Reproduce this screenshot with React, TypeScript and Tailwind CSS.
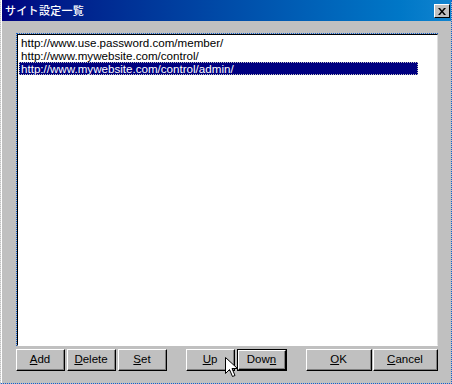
import React from 'react';

const urls = [
  'http://www.use.password.com/member/',
  'http://www.mywebsite.com/control/',
  'http://www.mywebsite.com/control/admin/',
];

const Btn = ({
  label,
  u,
  w,
  ml,
  isDefault = false,
}: {
  label: string;
  u: number;
  w: string;
  ml: string;
  isDefault?: boolean;
}) => {
  const before = label.slice(0, u);
  const key = label.slice(u, u + 1);
  const after = label.slice(u + 1);
  return (
    <div
      className={`${w} ${ml} h-[22px] ${
        isDefault ? 'border border-black' : ''
      } flex`}
    >
      <div className="flex-1 border-t border-l border-t-white border-l-white border-r border-b border-r-black border-b-black flex">
        <div className="flex-1 border-r border-b border-r-[#808080] border-b-[#808080] bg-[#c0c0c0] flex items-center justify-center text-[11.5px] text-black">
          {before}
          <span className="underline underline-offset-1">{key}</span>
          {after}
        </div>
      </div>
    </div>
  );
};

export default function App() {
  return (
    <div
      className="relative w-[452px] h-[384px] bg-[#c0c0c0] flex flex-col border-l border-l-[#dfdfdf] border-r border-r-[#1060d0] border-dotted border-b border-b-[#1060d0] overflow-hidden"
      style={{ fontFamily: '"Liberation Sans", Arial, "Noto Sans CJK JP", sans-serif' }}
    >
      <div className="h-[21px] bg-gradient-to-r from-[#000080] to-[#1084d0] flex items-center justify-between pl-[3px] pr-[1px] border-l border-l-white">
        <span
          className="text-white text-[11px] font-medium tracking-[0.3px]"
          style={{ fontFamily: '"Noto Sans CJK JP", sans-serif' }}
        >
          サイト設定一覧
        </span>
        <div className="w-[16px] h-[14px] mt-[1px] bg-[#c0c0c0] border-t border-l border-t-white border-l-white border-r border-b border-r-black border-b-black flex items-center justify-center">
          <svg width="8" height="7" viewBox="0 0 8 7">
            <path d="M0 0h2l2 2.5L6 0h2L5 3.5 8 7H6L4 4.5 2 7H0l3-3.5z" fill="black" />
          </svg>
        </div>
      </div>

      <div className="flex-1 flex flex-col border-l border-l-white">
        <div className="ml-[14px] mt-[12px] w-[422px] h-[313px] border-t border-l border-dotted border-t-[#1060d0] border-l-[#1060d0] flex">
          <div className="flex-1 border-t border-l border-t-black border-l-black border-r border-b border-r-[#dfdfdf] border-b-white bg-white pt-[1px] pl-[1px]">
            {urls.map((u, i) => (
              <div
                key={u}
                className={`w-[399px] h-[13px] leading-[13px] text-[11.6px] pl-[2px] ${
                  i === 2
                    ? 'bg-[#000080] text-white outline outline-1 outline-dotted outline-[#c0c0c0] -outline-offset-1'
                    : 'text-black'
                }`}
              >
                {u}
              </div>
            ))}
          </div>
        </div>

        <div className="flex mt-[3px]">
          <Btn label="Add" u={0} w="w-[49px]" ml="ml-[14px]" />
          <Btn label="Delete" u={0} w="w-[49px]" ml="ml-[2px]" />
          <Btn label="Set" u={0} w="w-[49px]" ml="ml-[2px]" />
          <Btn label="Up" u={0} w="w-[49px]" ml="ml-[19px]" />
          <Btn label="Down" u={3} w="w-[50px]" ml="ml-[2px]" isDefault />
          <Btn label="OK" u={0} w="w-[66px]" ml="ml-[19px]" />
          <Btn label="Cancel" u={0} w="w-[65px]" ml="ml-[1px]" />
        </div>
      </div>

      <svg
        className="absolute left-[224px] top-[357px]"
        width="13"
        height="22"
        viewBox="0 0 13 22"
      >
        <path
          d="M0.5 0.5v16l4-4 3 7 2.5-1-3-7h5.5z"
          fill="white"
          stroke="black"
          strokeWidth="1"
        />
      </svg>
    </div>
  );
}
